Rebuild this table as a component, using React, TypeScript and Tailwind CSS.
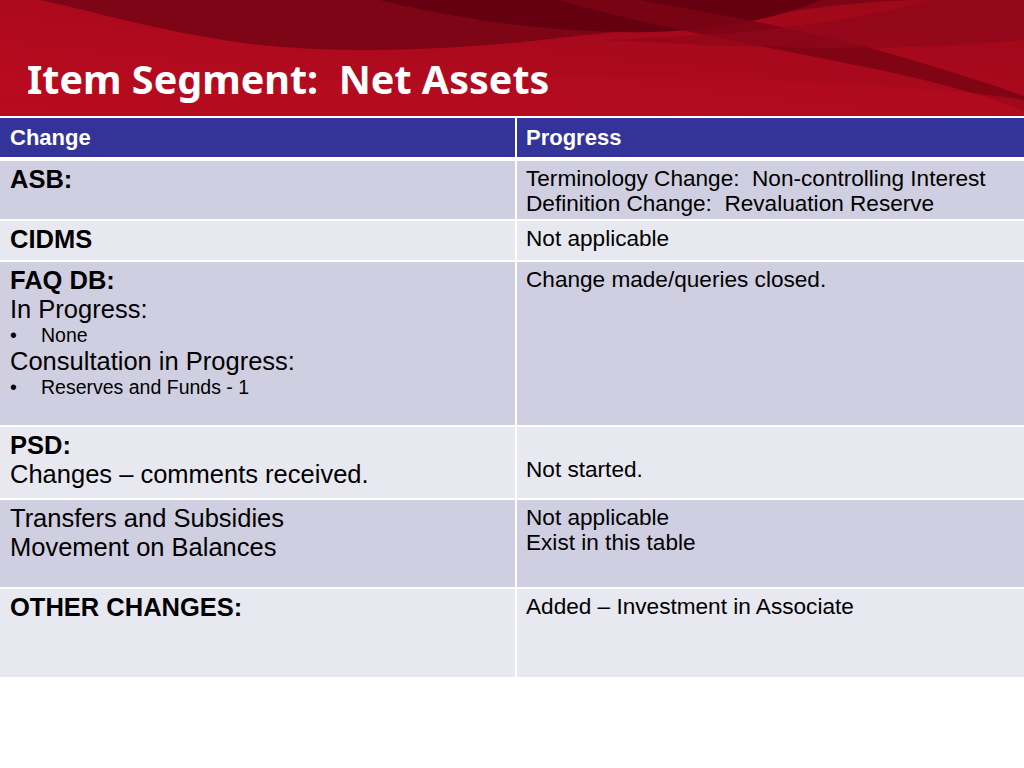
function Banner() {
  return (
    <div className="relative h-[116px] overflow-hidden bg-[#b00a1e]">
      <svg
        className="absolute inset-0 h-full w-full"
        viewBox="0 0 1024 116"
        preserveAspectRatio="none"
      >
        <defs>
          <linearGradient id="base" x1="0" y1="1" x2="1" y2="0">
            <stop offset="0" stopColor="#bc0b20" />
            <stop offset="0.6" stopColor="#a9091c" />
            <stop offset="1" stopColor="#9c0819" />
          </linearGradient>
        </defs>
        <rect width="1024" height="116" fill="url(#base)" />
        <path
          d="M40,0 C90,10 150,30 250,44 C360,56 470,48 560,38 C650,28 720,22 800,10 C860,2 900,0 920,0 Z"
          fill="#7e0515"
        />
        <path
          d="M380,0 C460,20 560,34 650,32 C720,30 780,18 820,0 Z"
          fill="#650010"
        />
        <path
          d="M560,0 C640,25 760,45 880,70 C950,85 1000,100 1024,112 L1024,96 C980,80 920,62 860,45 C760,20 680,8 640,0 Z"
          fill="#7a0414"
          opacity="0.85"
        />
        <path
          d="M600,40 C720,45 860,55 1024,40 L1024,0 L930,0 C860,20 760,35 600,40 Z"
          fill="#8f0719"
          opacity="0.7"
        />
        <path
          d="M0,95 C250,80 550,70 800,82 C900,87 980,92 1024,100 L1024,116 L0,116 Z"
          fill="#b40b1f"
          opacity="0.6"
        />
      </svg>
      <h1 className="relative pl-[27px] pt-[60px] font-['Noto_Sans',sans-serif] text-[39.5px] font-bold leading-none text-white">
        Item Segment:&nbsp; Net Assets
      </h1>
    </div>
  );
}

function Bullet({ children }: { children: React.ReactNode }) {
  return (
    <div className="flex text-[19.5px] leading-[23px]">
      <span className="w-[31px]">•</span>
      <span>{children}</span>
    </div>
  );
}

function Row({
  dark,
  h,
  left,
  right,
  rightPad = "pt-[5px]",
}: {
  dark: boolean;
  h: string;
  left: React.ReactNode;
  right: React.ReactNode;
  rightPad?: string;
}) {
  const bg = dark ? "bg-[#cfcfe1]" : "bg-[#e8e8f1]";
  return (
    <div className={`grid grid-cols-[515px_1fr] gap-x-[2px] ${h}`}>
      <div className={`${bg} pl-[10px] pt-[4px] text-[25.5px] leading-[29px]`}>
        {left}
      </div>
      <div className={`${bg} pl-[9px] ${rightPad} text-[22.6px] leading-[25px]`}>
        {right}
      </div>
    </div>
  );
}

export default function App() {
  return (
    <div className="h-[768px] w-[1024px] bg-white font-['Liberation_Sans',Arial,sans-serif] text-black">
      <Banner />
      <div className="mt-[2px] flex flex-col gap-y-[2px]">
        <div className="mb-[2px] grid h-[39px] grid-cols-[515px_1fr] gap-x-[2px] text-[22px] font-bold text-white">
          <div className="flex items-center bg-[#333399] pl-[10px]">Change</div>
          <div className="flex items-center bg-[#333399] pl-[9px]">Progress</div>
        </div>
        <Row
          dark
          h="h-[58px]"
          left={<div className="font-bold">ASB:</div>}
          right={
            <>
              <div>Terminology Change:&nbsp; Non-controlling Interest</div>
              <div>Definition Change:&nbsp; Revaluation Reserve</div>
            </>
          }
        />
        <Row
          dark={false}
          h="h-[39px]"
          left={<div className="font-bold">CIDMS</div>}
          right={<div>Not applicable</div>}
        />
        <Row
          dark
          h="h-[163px]"
          left={
            <>
              <div className="font-bold">FAQ DB:</div>
              <div>In Progress:</div>
              <Bullet>None</Bullet>
              <div>Consultation in Progress:</div>
              <Bullet>Reserves and Funds - 1</Bullet>
            </>
          }
          right={<div>Change made/queries closed.</div>}
        />
        <Row
          dark={false}
          h="h-[71px]"
          left={
            <>
              <div className="font-bold">PSD:</div>
              <div>Changes – comments received.</div>
            </>
          }
          right={<div>Not started.</div>}
          rightPad="pt-[30px]"
        />
        <Row
          dark
          h="h-[87px]"
          left={
            <>
              <div>Transfers and Subsidies</div>
              <div>Movement on Balances</div>
            </>
          }
          right={
            <>
              <div>Not applicable</div>
              <div>Exist in this table</div>
            </>
          }
        />
        <Row
          dark={false}
          h="h-[88px]"
          left={<div className="font-bold">OTHER CHANGES:</div>}
          right={<div>Added – Investment in Associate</div>}
        />
      </div>
    </div>
  );
}
